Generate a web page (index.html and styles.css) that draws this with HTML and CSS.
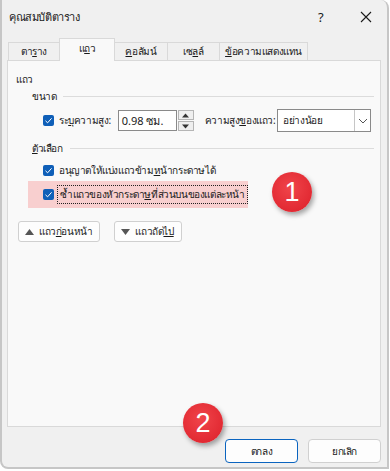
FILE: index.html
```html
<!DOCTYPE html>
<html lang="th">
<head>
    <meta charset="UTF-8">
    <meta name="viewport" content="width=device-width, initial-scale=1.0">
    <title>คุณสมบัติตาราง</title>
    <link rel="stylesheet" href="styles.css">
</head>
<body>
    <div class="window">
        <!-- Title bar -->
        <div class="titlebar">
            <span class="title">คุณสมบัติตาราง</span>
            <span class="help">?</span>
            <span class="close">
                <svg width="12" height="12" viewBox="0 0 12 12"><path d="M1 1 L11 11 M11 1 L1 11" stroke="#1a1a1a" stroke-width="1.1" fill="none"/></svg>
            </span>
        </div>

        <!-- Tabs -->
        <div class="tabs">
            <div class="tab"><span>ตา<u>ร</u>าง</span></div>
            <div class="tab active"><span>แ<u>ถ</u>ว</span></div>
            <div class="tab"><span><u>ค</u>อลัมน์</span></div>
            <div class="tab"><span>เซ<u>ล</u>ล์</span></div>
            <div class="tab"><span><u>ข้</u>อความแสดงแทน</span></div>
        </div>

        <!-- Panel -->
        <div class="panel">
            <div class="heading">แถว</div>

            <div class="group">
                <span class="group-title">ขนาด</span>
                <span class="group-line"></span>
            </div>

            <div class="size-row">
                <span class="check"><svg width="9" height="9" viewBox="0 0 9 9"><path d="M1.5 4.8 L3.6 6.8 L7.6 2.3" stroke="#fff" stroke-width="1" fill="none"/></svg></span>
                <span class="label">ระ<u>บุ</u>ความสูง:</span>
                <span class="spin">
                    <span class="spin-value">0.98 ซม.</span>
                    <span class="spin-buttons">
                        <span class="spin-btn"><svg width="7" height="5" viewBox="0 0 7 5"><path d="M0 4.5 L3.5 0.5 L7 4.5 Z" fill="#333"/></svg></span>
                        <span class="spin-btn"><svg width="7" height="5" viewBox="0 0 7 5"><path d="M0 0.5 L3.5 4.5 L7 0.5 Z" fill="#333"/></svg></span>
                    </span>
                </span>
                <span class="label label-gap">ความสูง<u>ข</u>องแถว:</span>
                <span class="select">
                    <span class="select-value">อย่างน้อย</span>
                    <span class="select-btn"><svg width="10" height="6" viewBox="0 0 10 6"><path d="M1 1 L5 5 L9 1" stroke="#555" stroke-width="1" fill="none"/></svg></span>
                </span>
            </div>

            <div class="group group-options">
                <span class="group-title"><u>ตั</u>วเลือก</span>
                <span class="group-line"></span>
            </div>

            <div class="check-row">
                <span class="check"><svg width="9" height="9" viewBox="0 0 9 9"><path d="M1.5 4.8 L3.6 6.8 L7.6 2.3" stroke="#fff" stroke-width="1" fill="none"/></svg></span>
                <span class="label">อนุญาตให้แบ่งแถวข้าม<u>ห</u>น้ากระดาษได้</span>
            </div>

            <div class="check-row highlight">
                <span class="check"><svg width="9" height="9" viewBox="0 0 9 9"><path d="M1.5 4.8 L3.6 6.8 L7.6 2.3" stroke="#fff" stroke-width="1" fill="none"/></svg></span>
                <span class="label focus">ซ้ำแถวของหัวกระดา<u>ษ</u>ที่ส่วนบนของแต่ละหน้า</span>
            </div>

            <div class="nav-buttons">
                <span class="nav-btn"><svg width="9" height="6" viewBox="0 0 9 6"><path d="M0 6 L4.5 0 L9 6 Z" fill="#555"/></svg><span>แถว<u>ก่</u>อนหน้า</span></span>
                <span class="nav-btn"><svg width="9" height="6" viewBox="0 0 9 6"><path d="M0 0 L4.5 6 L9 0 Z" fill="#555"/></svg><span>แถวถัด<u>ไป</u></span></span>
            </div>
        </div>

        <!-- Footer -->
        <div class="footer">
            <span class="btn primary">ตกลง</span>
            <span class="btn">ยกเลิก</span>
        </div>

        <div class="badge badge-one">1</div>
        <div class="badge badge-two">2</div>
    </div>
</body>
</html>
```

FILE: styles.css
```css
* {
    box-sizing: border-box;
}

body {
    margin: 0;
    background-color: #ffffff;
    font-family: "Noto Sans", "DejaVu Sans", sans-serif;
    font-size: 10px;
    letter-spacing: -0.4px;
    color: #1a1a1a;
}

.window {
    position: relative;
    width: 389px;
    height: 469px;
    background-color: #f0f0f0;
    border-left: 2px solid #c6c6c6;
    border-right: 2px solid #c6c6c6;
    border-bottom: 2px solid #c6c6c6;
    border-radius: 0 8px 0 8px;
    display: flex;
    flex-direction: column;
}

.titlebar {
    height: 34px;
    display: flex;
    align-items: center;
    padding-left: 7px;
}

.title {
    flex: 1;
    font-size: 11px;
}

.help {
    width: 8px;
    font-size: 13px;
    letter-spacing: 0;
    margin-right: 34px;
}

.close {
    width: 12px;
    margin-right: 15px;
    display: flex;
}

.tabs {
    display: flex;
    align-items: flex-end;
    padding-left: 6px;
    height: 26px;
}

.tab {
    height: 18px;
    display: flex;
    align-items: center;
    justify-content: center;
    border: 1px solid #d9d9d9;
    border-bottom: none;
    border-right: none;
    background-color: #f0f0f0;
    white-space: nowrap;
}

.tab:nth-child(1) { width: 51px; }
.tab:nth-child(2) { width: 56px; }
.tab:nth-child(3) { width: 52px; }
.tab:nth-child(4) { width: 52px; }
.tab:nth-child(5) { width: 89px; border-right: 1px solid #d9d9d9; }

.tab.active {
    height: 23px;
    padding-bottom: 4px;
    background-color: #f9f9f9;
    border-right: 1px solid #d9d9d9;
    margin-bottom: -1px;
    position: relative;
    z-index: 1;
}

.tab.active + .tab {
    border-left: none;
}

.panel {
    margin: 0 6px 0 5px;
    height: 367px;
    background-color: #f9f9f9;
    border: 1px solid #d9d9d9;
    padding: 10px 0 0 8px;
}

.heading {
    height: 16px;
    line-height: 16px;
}

.group {
    display: flex;
    align-items: center;
    gap: 7px;
    margin: 1px 6px 0 16px;
    height: 16px;
}

.group-line {
    flex: 1;
    height: 1px;
    background-color: #dcdcdc;
}

.group-options {
    margin-top: 8px;
}

.size-row {
    display: flex;
    align-items: center;
    margin: 5px 0 0 27px;
    height: 23px;
}

.check {
    width: 11px;
    height: 11px;
    border-radius: 2px;
    background-color: #0f5fb8;
    display: flex;
    align-items: center;
    justify-content: center;
    flex-shrink: 0;
}

.label {
    margin-left: 5px;
    white-space: nowrap;
}

.spin {
    display: flex;
    margin-left: 7px;
    height: 21px;
}

.spin-value {
    width: 59px;
    border: 1px solid #8a8a8a;
    background-color: #ffffff;
    padding-left: 3px;
    display: flex;
    align-items: center;
    font-size: 11px;
    letter-spacing: 0;
}

.spin-buttons {
    width: 16px;
    margin-left: 1px;
    display: flex;
    flex-direction: column;
    gap: 1px;
}

.spin-btn {
    flex: 1;
    border: 1px solid #b5b5b5;
    background-color: #efefef;
    display: flex;
    align-items: center;
    justify-content: center;
}

.label-gap {
    margin-left: 11px;
}

.select {
    display: flex;
    margin-left: 2px;
    width: 94px;
    height: 23px;
    border: 1px solid #8a8a8a;
    background-color: #ffffff;
}

.select-value {
    flex: 1;
    display: flex;
    align-items: center;
    padding-left: 5px;
}

.select-btn {
    width: 16px;
    border-left: 1px solid #c6c6c6;
    display: flex;
    align-items: center;
    justify-content: center;
}

.check-row {
    display: flex;
    align-items: center;
    height: 21px;
    margin-left: 27px;
}

.group-options + .check-row {
    margin-top: 4px;
}

.check-row.highlight {
    margin-left: 12px;
    padding-left: 15px;
    width: 220px;
    height: 27px;
    background-color: #f8cfcf;
}

.focus {
    outline: 1px dotted #222;
    padding: 1px 2px;
    margin-left: 4px;
}

.nav-buttons {
    display: flex;
    gap: 14px;
    margin: 13px 0 0 2px;
}

.nav-btn {
    height: 21px;
    display: flex;
    align-items: center;
    gap: 5px;
    padding: 0 7px 0 6px;
    border: 1px solid #d0d0d0;
    border-radius: 3px;
    background-color: #fdfdfd;
    white-space: nowrap;
}

.footer {
    display: flex;
    justify-content: flex-end;
    gap: 10px;
    padding: 12px 6px 0 0;
}

.btn {
    width: 73px;
    height: 24px;
    display: flex;
    align-items: center;
    justify-content: center;
    border: 1px solid #d0d0d0;
    border-radius: 4px;
    background-color: #fdfdfd;
}

.btn.primary {
    border: 1.5px solid #0a64bf;
}

.badge {
    position: absolute;
    width: 40px;
    height: 40px;
    border-radius: 50%;
    background: radial-gradient(circle at 45% 40%, #f0444a 0%, #e22a33 70%, #d51f2a 100%);
    color: #ffffff;
    font-family: "Liberation Sans", Arial, sans-serif;
    font-size: 27px;
    letter-spacing: 0;
    display: flex;
    align-items: center;
    justify-content: center;
    box-shadow: 2px 3px 5px rgba(0, 0, 0, 0.35);
}

.badge-one {
    left: 270px;
    top: 172px;
}

.badge-two {
    left: 181px;
    top: 403px;
}
```
